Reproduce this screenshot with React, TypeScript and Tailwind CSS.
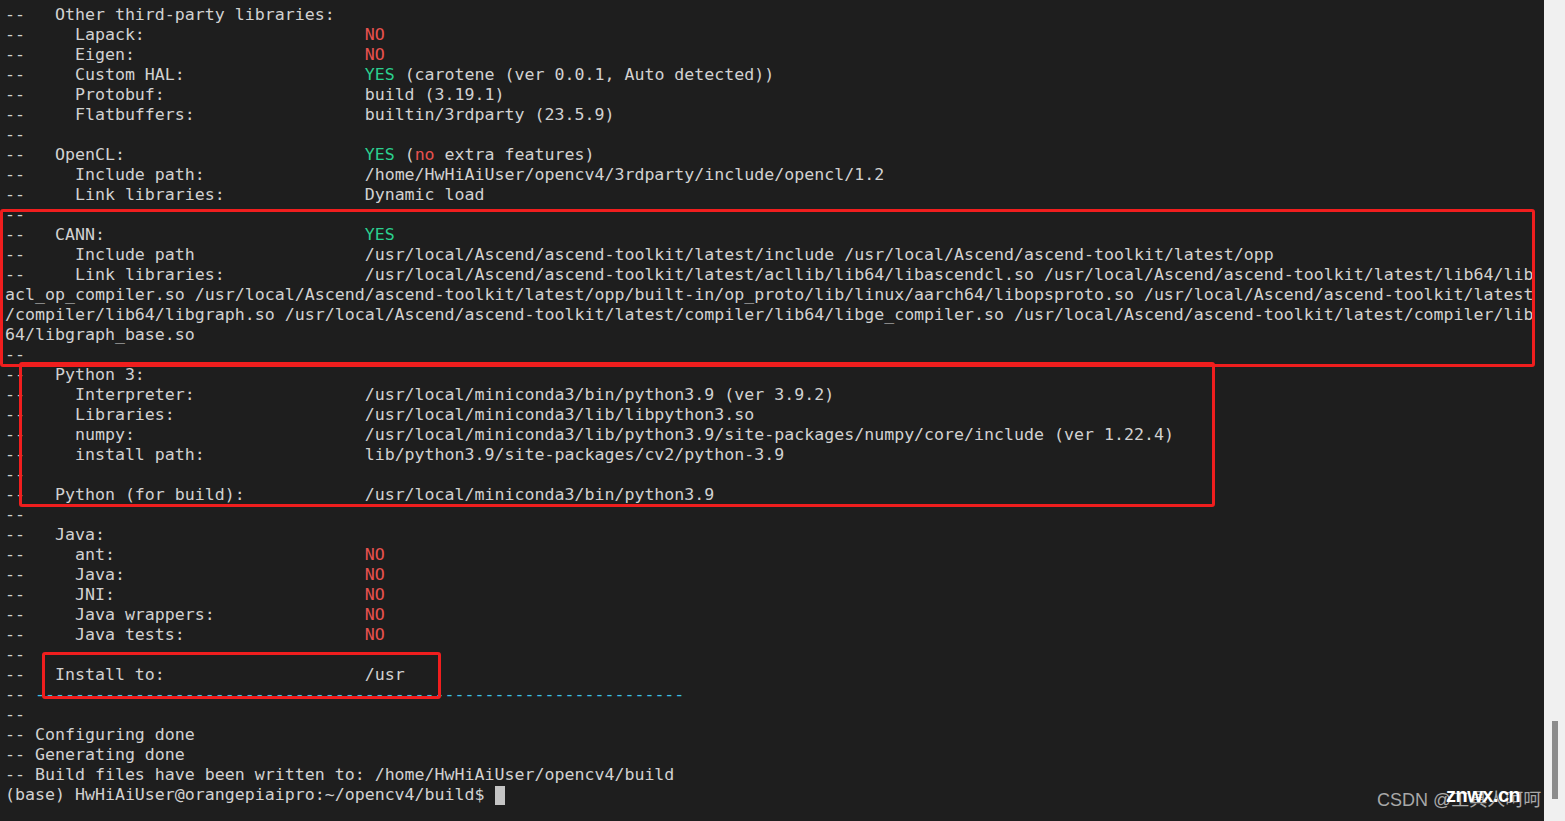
import React from 'react';

type Seg = { t: string; c?: 'red' | 'green' | 'cyan' };

const colorClass = {
  red: 'text-[#e8524f]',
  green: 'text-[#2bd08f]',
  cyan: 'text-[#3cc0e2]',
};

// label padded to column 36 like cmake's status output
function kv(label: string, ...value: Seg[]): Seg[] {
  return [{ t: label.padEnd(36, ' ') }, ...value];
}

const lines: Seg[][] = [
  [{ t: '--   Other third-party libraries:' }],
  kv('--     Lapack:', { t: 'NO', c: 'red' }),
  kv('--     Eigen:', { t: 'NO', c: 'red' }),
  kv('--     Custom HAL:', { t: 'YES', c: 'green' }, { t: ' (carotene (ver 0.0.1, Auto detected))' }),
  kv('--     Protobuf:', { t: 'build (3.19.1)' }),
  kv('--     Flatbuffers:', { t: 'builtin/3rdparty (23.5.9)' }),
  [{ t: '--' }],
  kv('--   OpenCL:', { t: 'YES', c: 'green' }, { t: ' (' }, { t: 'no', c: 'red' }, { t: ' extra features)' }),
  kv('--     Include path:', { t: '/home/HwHiAiUser/opencv4/3rdparty/include/opencl/1.2' }),
  kv('--     Link libraries:', { t: 'Dynamic load' }),
  [{ t: '--' }],
  kv('--   CANN:', { t: 'YES', c: 'green' }),
  kv('--     Include path', {
    t: '/usr/local/Ascend/ascend-toolkit/latest/include /usr/local/Ascend/ascend-toolkit/latest/opp',
  }),
  kv('--     Link libraries:', {
    t: '/usr/local/Ascend/ascend-toolkit/latest/acllib/lib64/libascendcl.so /usr/local/Ascend/ascend-toolkit/latest/lib64/lib',
  }),
  [
    {
      t: 'acl_op_compiler.so /usr/local/Ascend/ascend-toolkit/latest/opp/built-in/op_proto/lib/linux/aarch64/libopsproto.so /usr/local/Ascend/ascend-toolkit/latest',
    },
  ],
  [
    {
      t: '/compiler/lib64/libgraph.so /usr/local/Ascend/ascend-toolkit/latest/compiler/lib64/libge_compiler.so /usr/local/Ascend/ascend-toolkit/latest/compiler/lib',
    },
  ],
  [{ t: '64/libgraph_base.so' }],
  [{ t: '--' }],
  [{ t: '--   Python 3:' }],
  kv('--     Interpreter:', { t: '/usr/local/miniconda3/bin/python3.9 (ver 3.9.2)' }),
  kv('--     Libraries:', { t: '/usr/local/miniconda3/lib/libpython3.so' }),
  kv('--     numpy:', { t: '/usr/local/miniconda3/lib/python3.9/site-packages/numpy/core/include (ver 1.22.4)' }),
  kv('--     install path:', { t: 'lib/python3.9/site-packages/cv2/python-3.9' }),
  [{ t: '--' }],
  kv('--   Python (for build):', { t: '/usr/local/miniconda3/bin/python3.9' }),
  [{ t: '--' }],
  [{ t: '--   Java:' }],
  kv('--     ant:', { t: 'NO', c: 'red' }),
  kv('--     Java:', { t: 'NO', c: 'red' }),
  kv('--     JNI:', { t: 'NO', c: 'red' }),
  kv('--     Java wrappers:', { t: 'NO', c: 'red' }),
  kv('--     Java tests:', { t: 'NO', c: 'red' }),
  [{ t: '--' }],
  kv('--   Install to:', { t: '/usr' }),
  [{ t: '-- ' }, { t: '-'.repeat(65), c: 'cyan' }],
  [{ t: '--' }],
  [{ t: '-- Configuring done' }],
  [{ t: '-- Generating done' }],
  [{ t: '-- Build files have been written to: /home/HwHiAiUser/opencv4/build' }],
];

function Line({ segs }: { segs: Seg[] }) {
  return (
    <div className="h-[20px]">
      {segs.map((s, i) => (
        <span key={i} className={s.c ? colorClass[s.c] : undefined}>
          {s.t}
        </span>
      ))}
    </div>
  );
}

export default function App() {
  return (
    <div className="flex h-[821px] w-[1565px] overflow-hidden bg-[#f0f0f0]">
      <div
        className="relative flex-1 overflow-hidden bg-[#1e1e1e] pl-[5px] pt-[5px] text-[16.6px] leading-[20px] whitespace-pre text-[#d2d2d2]"
        style={{ fontFamily: '"DejaVu Sans Mono", "Liberation Mono", monospace' }}
      >
        {lines.map((l, i) => (
          <Line key={i} segs={l} />
        ))}
        <div className="flex h-[20px] items-center">
          <span>(base) HwHiAiUser@orangepiaipro:~/opencv4/build$ </span>
          <span className="inline-block h-[19px] w-[10px] bg-[#c4c4c4]" />
        </div>

        {/* highlight boxes drawn over the output */}
        <div className="absolute left-0 top-[209px] h-[158px] w-[1535px] rounded-[3px] border-[3px] border-[#f01e1e]" />
        <div className="absolute left-[19px] top-[362px] h-[145px] w-[1196px] rounded-[3px] border-[3px] border-[#f01e1e]" />
        <div className="absolute left-[42px] top-[652px] h-[47px] w-[399px] rounded-[3px] border-[3px] border-[#f01e1e]" />

        {/* watermark */}
        <div
          className="absolute left-[1377px] top-[788px] text-[18px] leading-[24px] text-[#a8a8a8]"
          style={{ fontFamily: '"Liberation Sans", "Noto Sans CJK SC", sans-serif' }}
        >
          CSDN @工具人呵呵
        </div>
        <div
          className="absolute left-[1446px] top-[783px] text-[20px] font-bold leading-[24px] tracking-[-0.5px] text-white"
          style={{ fontFamily: '"Liberation Sans", sans-serif' }}
        >
          znwx.cn
        </div>
      </div>
      <div className="flex w-[21px] flex-col">
        <div className="ml-[8px] mt-[721px] h-[78px] w-[6px] bg-[#8c8c8c]" />
      </div>
    </div>
  );
}
